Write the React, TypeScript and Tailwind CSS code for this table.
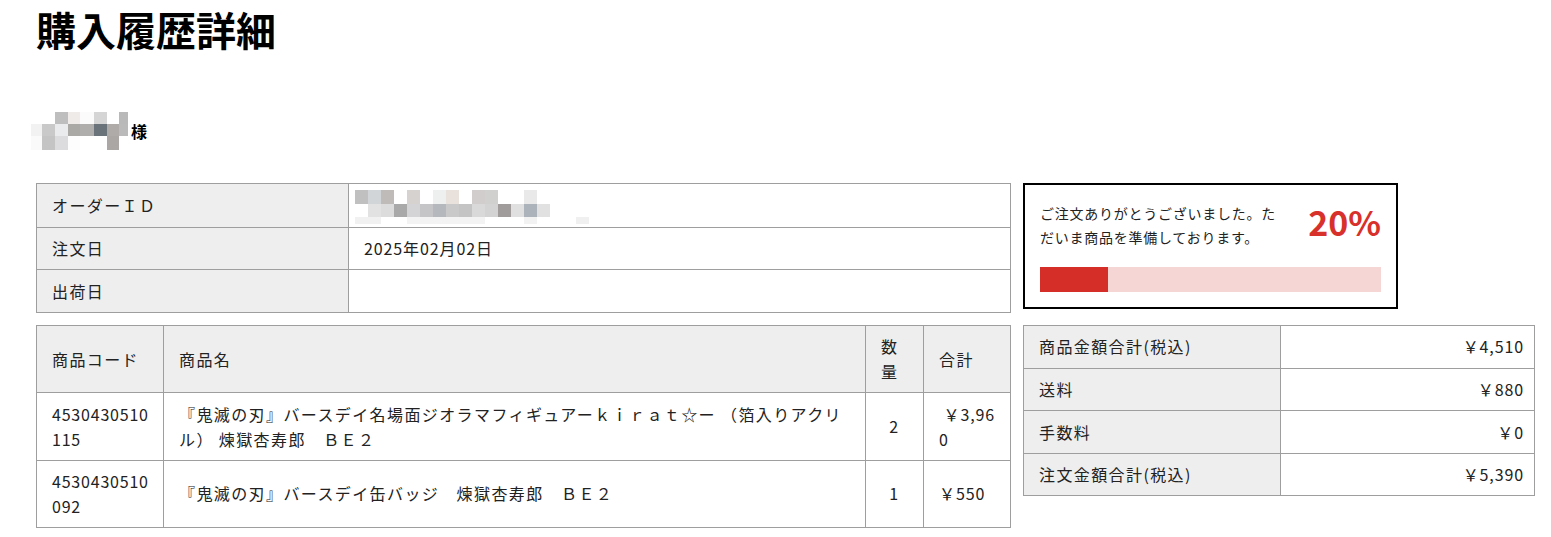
import React from "react";

// pixelated blur blocks, written out as full class names
const nameMosaic = {
  cols: "grid-cols-[11px_13px_13px_12px_14px_13px_12px_9px]",
  rows: "grid-rows-[12px_12px_14px]",
  cells: [
    "bg-white", "bg-white", "bg-[#bebebe]", "bg-[#eeebe8]", "bg-[#fbfbfb]", "bg-[#d5d5d5]", "bg-white", "bg-[#b9b9b9]",
    "bg-[#f2f2f2]", "bg-[#c9c9c9]", "bg-[#e9ebed]", "bg-[#aba9a6]", "bg-[#afaeac]", "bg-[#6b737a]", "bg-[#aeaba9]", "bg-[#bababa]",
    "bg-[#fafafa]", "bg-[#c4c4c4]", "bg-[#dcdcde]", "bg-[#fdfdfd]", "bg-white", "bg-white", "bg-[#aaa7a4]", "bg-white",
  ],
};

const orderMosaic = {
  cols: "grid-cols-[repeat(18,13px)]",
  rows: "grid-rows-[14px_13px_7px]",
  cells: [
    "bg-[#c0c0c0]", "bg-[#d1d5d7]", "bg-[#bfbbb8]", "bg-white", "bg-[#d6d2cf]", "bg-white", "bg-[#eef0f0]", "bg-[#e9e1db]", "bg-white",
    "bg-[#d0cdcc]", "bg-[#d0d0cf]", "bg-white", "bg-white", "bg-[#e9e9ea]", "bg-white", "bg-white", "bg-white", "bg-white",
    "bg-white", "bg-[#e2e2e2]", "bg-[#dcdcdc]", "bg-[#a9a9a9]", "bg-[#d4d4d6]", "bg-[#c5c5c7]", "bg-[#b5b9bd]", "bg-[#c9c9c9]", "bg-[#c5c4c4]",
    "bg-[#d9d9d9]", "bg-[#d3d3d3]", "bg-[#a09c9c]", "bg-[#e0e0e0]", "bg-[#adb3bb]", "bg-[#e1e1e1]", "bg-white", "bg-white", "bg-white",
    "bg-[#f1f1f1]", "bg-[#f1f1f1]", "bg-white", "bg-white", "bg-[#f3f3f3]", "bg-[#f3f3f3]", "bg-[#f3f3f3]", "bg-[#f3f3f3]", "bg-[#f3f3f3]",
    "bg-[#f3f3f3]", "bg-white", "bg-white", "bg-white", "bg-[#f2f2f2]", "bg-white", "bg-white", "bg-white", "bg-[#f0f0f0]",
  ],
};

function Mosaic({ m, className }: { m: { cols: string; rows: string; cells: string[] }; className?: string }) {
  return (
    <div className={`grid ${m.cols} ${m.rows} ${className ?? ""}`}>
      {m.cells.map((c, i) => (
        <div key={i} className={c} />
      ))}
    </div>
  );
}

const cell = "border border-[#9e9e9e] px-[15px] py-[8.4px] leading-[24.8px] align-middle";
const head = "border border-[#9e9e9e] px-[15px] py-[8.4px] leading-[24.8px] align-middle bg-[#eeeeee] font-normal text-left";

const items = [
  {
    code: "4530430510115",
    name: "『鬼滅の刃』バースデイ名場面ジオラマフィギュアーｋｉｒａｔ☆ー （箔入りアクリル） 煉獄杏寿郎　ＢＥ２",
    qty: 2,
    total: "\u00a0￥3,960",
  },
  {
    code: "4530430510092",
    name: "『鬼滅の刃』バースデイ缶バッジ　煉獄杏寿郎　ＢＥ２",
    qty: 1,
    total: "￥550",
  },
];

const summary = [
  { label: "商品金額合計(税込)", value: "￥4,510" },
  { label: "送料", value: "￥880" },
  { label: "手数料", value: "￥0" },
  { label: "注文金額合計(税込)", value: "￥5,390" },
];

export default function App() {
  const progress = 20;
  return (
    <div className="min-h-screen bg-white pl-[36px] pt-[9px] pb-4 text-[#222] font-['Noto_Sans_CJK_JP',sans-serif]">
      <h1 className="text-[40px] leading-none font-bold text-black">購入履歴詳細</h1>

      {/* customer name */}
      <div className="mt-[63px] -ml-[5px] flex items-start">
        <Mosaic m={nameMosaic} />
        <span className="ml-[3px] mt-[11px] text-[16px] leading-none font-bold text-black">様</span>
      </div>

      <div className="mt-[33px] flex items-start gap-[12px]">
        {/* left column */}
        <div className="w-[975px] flex flex-col gap-[12px] text-[16px] tracking-[1.4px]">
          <table className="w-full table-fixed border-collapse">
            <colgroup>
              <col className="w-[312px]" />
              <col />
            </colgroup>
            <tbody>
              <tr>
                <th className={head}>オーダーＩＤ</th>
                <td className={cell}>
                  <Mosaic m={orderMosaic} className="-ml-[9px] -mt-[2px] -mb-[6px]" />
                </td>
              </tr>
              <tr>
                <th className={head}>注文日</th>
                <td className={`${cell} tracking-[0.9px]`}>2025年02月02日</td>
              </tr>
              <tr>
                <th className={head}>出荷日</th>
                <td className={cell}></td>
              </tr>
            </tbody>
          </table>

          <table className="w-full table-fixed border-collapse">
            <colgroup>
              <col className="w-[127px]" />
              <col />
              <col className="w-[58px]" />
              <col className="w-[87px]" />
            </colgroup>
            <thead>
              <tr>
                <th className={head}>商品コード</th>
                <th className={head}>商品名</th>
                <th className={head}>数量</th>
                <th className={head}>合計</th>
              </tr>
            </thead>
            <tbody>
              {items.map((it) => (
                <tr key={it.code}>
                  <td className={`${cell} pr-[6px] break-all tracking-[0.8px]`}>{it.code}</td>
                  <td className={cell}>{it.name}</td>
                  <td className={`${cell} text-center`}>{it.qty}</td>
                  <td className={`${cell} pr-[8px] break-all tracking-[0.9px]`}>{it.total}</td>
                </tr>
              ))}
            </tbody>
          </table>
        </div>

        {/* right column */}
        <div className="w-[512px] flex flex-col gap-[16px]">
          <div className="w-[375px] border-2 border-black px-[15px] pt-[16px] pb-[15px]">
            <div className="flex items-center justify-between">
              <p className="w-[240px] text-[14px] leading-[24px] tracking-[0.75px]">
                ご注文ありがとうございました。ただいま商品を準備しております。
              </p>
              <span className="text-[34px] leading-none font-bold text-[#d8302a] -mt-[6px]">{progress}%</span>
            </div>
            <div className="mt-[18px] h-[25px] bg-[#f6d5d5]">
              <div className="h-full bg-[#d52d28]" style={{ width: `${progress}%` }} />
            </div>
          </div>

          <table className="w-full table-fixed border-collapse text-[16px] tracking-[1.4px]">
            <colgroup>
              <col className="w-[257px]" />
              <col />
            </colgroup>
            <tbody>
              {summary.map((r) => (
                <tr key={r.label}>
                  <th className={head}>{r.label}</th>
                  <td className={`${cell} text-right pr-[10px] tracking-[0.9px]`}>{r.value}</td>
                </tr>
              ))}
            </tbody>
          </table>
        </div>
      </div>
    </div>
  );
}
